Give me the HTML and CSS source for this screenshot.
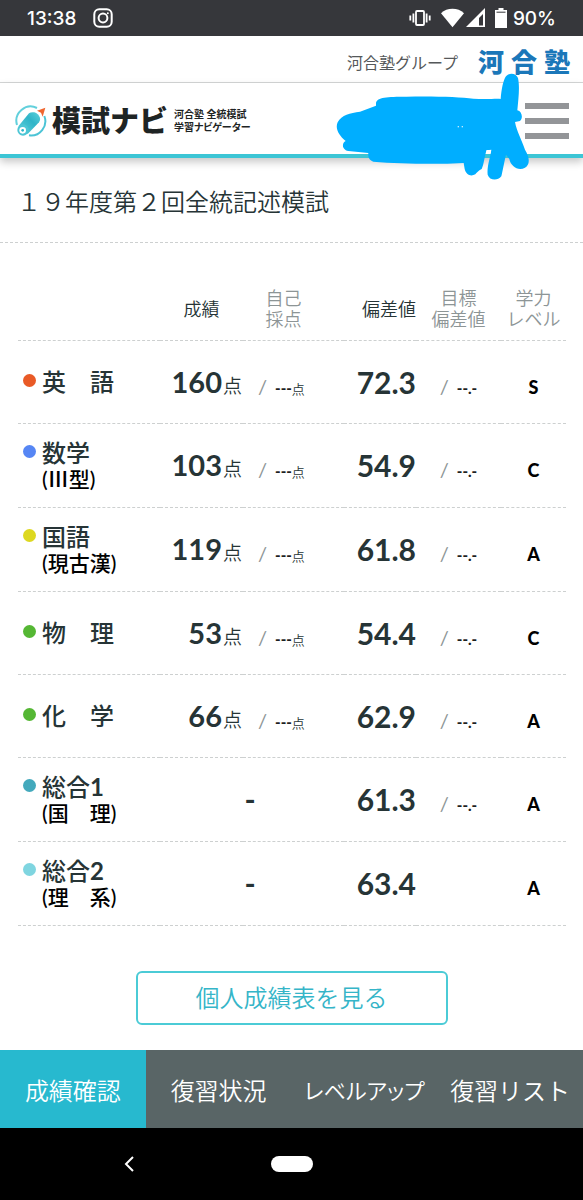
FILE: index.html
```html
<!DOCTYPE html>
<html lang="ja">
<head>
<meta charset="utf-8">
<meta name="viewport" content="width=device-width, initial-scale=1">
<title>模試ナビ</title>
<link rel="stylesheet" href="styles.css">
</head>
<body>
<div class="statusbar">
  <span class="clock">13:38</span>
  <svg class="insta" width="20" height="20" viewBox="0 0 20 20" fill="none" stroke="#fff" stroke-width="2"><rect x="1.3" y="1.3" width="17.4" height="17.4" rx="5"/><circle cx="10" cy="10" r="4.4"/><circle cx="14.8" cy="5.2" r="1" fill="#fff" stroke="none"/></svg>
  <span class="status-right">
    <svg width="22" height="18" viewBox="0 0 22 18" fill="none" stroke="#fff" stroke-width="1.8"><rect x="7" y="2" width="8" height="14" rx="1"/><path d="M4.4 4.5v9M1.3 6.5v5M17.6 4.5v9M20.7 6.5v5"/></svg>
    <svg class="wifi" width="23" height="20" viewBox="0 0 23 20"><path d="M0 5.2C6-.6 17-.6 23 5.2L11.5 19.200z" fill="#fff"/></svg>
    <svg width="19" height="20" viewBox="0 0 19 20"><path fill="#fff" fill-rule="evenodd" d="M19 0v19H0zM17 6l-4 4v7.500h4z"/></svg>
    <svg class="battery" width="12" height="20" viewBox="0 0 12 20"><path fill="#fff" d="M3.500 0h5v2H12v18H0V2h3.500z"/><path d="M1.500 4.200h9" stroke="#36373b" stroke-width="1"/></svg>
    <span class="percent">90%</span>
  </span>
</div>

<div class="groupbar">
  <span class="group-name">河合塾グループ</span>
  <a class="group-logo" href="#" aria-label="河合塾"><span>河</span><span>合</span><span>塾</span></a>
</div>

<header class="header">
  <a class="brand" href="#">
    <svg class="brand-mark" width="32" height="32" viewBox="0 0 96 96">
      <defs><linearGradient id="pen" x1="0" y1="1" x2="1" y2="0"><stop offset="0" stop-color="#5fd2dc"/><stop offset=".6" stop-color="#2fb4c8"/><stop offset="1" stop-color="#5fd2dc"/></linearGradient></defs>
      <path d="M66 9A43 43 0 0 0 6 60" fill="none" stroke="#62d0dc" stroke-width="6"/>
      <path d="M88 33A43 43 0 0 1 42 91" fill="none" stroke="#4cc4d6" stroke-width="6"/>
      <path d="M91 8L83 35 78 23 66 17z" fill="#f0662f"/>
      <path d="M10 64L42 25Q48 20 58 22 70 26 75 38 77 46 72 52L38 87z" fill="url(#pen)"/>
      <circle cx="24" cy="75" r="17" fill="#4cc6d5"/><circle cx="23" cy="76" r="10" fill="#fff"/><circle cx="23" cy="76" r="4" fill="#2cb5c8"/>
    </svg>
    <span class="brand-name">模試ナビ</span>
    <span class="brand-sub">河合塾 全統模試<br>学習ナビゲーター</span>
  </a>
  <button class="menu" type="button" aria-label="メニュー"><span></span><span></span><span></span></button>
  <svg class="scribble" width="195" height="108" viewBox="105 220 585 324" aria-hidden="true">
    <path fill="#00aeff" d="M228 310C232 292 260 291 320 291C400 289 480 292 520 297C560 300 590 296 602 298C604 270 610 240 618 230C628 218 648 220 654 235C660 262 655 300 652 332C666 335 670 355 660 364L645 367C650 395 665 420 675 450C690 475 690 495 675 504C655 515 632 500 628 478L618 465C612 490 608 515 604 530C592 545 568 542 563 525C560 500 572 470 574 450L560 452C553 470 552 495 545 508C535 512 530 520 526 524C512 532 498 525 494 508L491 490C400 495 300 492 220 486C205 480 204 468 205 460L145 454C125 450 125 430 137 424C115 405 105 385 113 368C125 345 150 340 180 336L228 318Z"/>
    <path fill="#fff" d="M473 380h4v3h-4zM485 380h4v3h-4zM560 451h12v8h-14z"/>
  </svg>
</header>

<main>
  <h1 class="title">１９年度第２回全統記述模試</h1>
  <table class="scores">
    <colgroup><col class="c-name"><col class="c-score"><col class="c-self"><col class="c-dev"><col class="c-target"><col class="c-level"></colgroup>
    <thead>
      <tr><td></td><th scope="col">成績</th><th class="sub self" scope="col">自己<br>採点</th><th class="dev" scope="col">偏差値</th><th class="sub" scope="col">目標<br>偏差値</th><th class="sub" scope="col">学力<br>レベル</th></tr>
    </thead>
    <tbody>
      <tr><th scope="row"><div class="subject"><i class="dot red"></i><span>英　語</span></div></th><td class="score">160<small>点</small></td><td class="self"><i>/</i><b>---</b><em>点</em></td><td class="dev">72.3</td><td class="target"><i>/</i><b>--.-</b></td><td class="level"><b>S</b></td></tr>
      <tr class="double"><th scope="row"><div class="subject"><i class="dot blue"></i><span>数学<small>(Ⅲ型)</small></span></div></th><td class="score">103<small>点</small></td><td class="self"><i>/</i><b>---</b><em>点</em></td><td class="dev">54.9</td><td class="target"><i>/</i><b>--.-</b></td><td class="level"><b>C</b></td></tr>
      <tr class="double"><th scope="row"><div class="subject"><i class="dot yellow"></i><span>国語<small>(現古漢)</small></span></div></th><td class="score">119<small>点</small></td><td class="self"><i>/</i><b>---</b><em>点</em></td><td class="dev">61.8</td><td class="target"><i>/</i><b>--.-</b></td><td class="level"><b>A</b></td></tr>
      <tr><th scope="row"><div class="subject"><i class="dot green"></i><span>物　理</span></div></th><td class="score">53<small>点</small></td><td class="self"><i>/</i><b>---</b><em>点</em></td><td class="dev">54.4</td><td class="target"><i>/</i><b>--.-</b></td><td class="level"><b>C</b></td></tr>
      <tr><th scope="row"><div class="subject"><i class="dot green"></i><span>化　学</span></div></th><td class="score">66<small>点</small></td><td class="self"><i>/</i><b>---</b><em>点</em></td><td class="dev">62.9</td><td class="target"><i>/</i><b>--.-</b></td><td class="level"><b>A</b></td></tr>
      <tr class="double"><th scope="row"><div class="subject"><i class="dot teal"></i><span>総合<b>1</b><small>(国　理)</small></span></div></th><td class="none" colspan="2">-</td><td class="dev">61.3</td><td class="target"><i>/</i><b>--.-</b></td><td class="level"><b>A</b></td></tr>
      <tr class="double"><th scope="row"><div class="subject"><i class="dot aqua"></i><span>総合<b>2</b><small>(理　系)</small></span></div></th><td class="none" colspan="2">-</td><td class="dev">63.4</td><td class="target"></td><td class="level"><b>A</b></td></tr>
    </tbody>
  </table>
  <button class="report" type="button">個人成績表を見る</button>
</main>

<nav class="tabs">
  <a class="active" href="#">成績確認</a>
  <a href="#">復習状況</a>
  <a class="kana" href="#">レベルアップ</a>
  <a href="#">復習リスト</a>
</nav>
<div class="sysnav">
  <svg width="10" height="16" viewBox="0 0 10 16" fill="none" stroke="#fff" stroke-width="2"><path d="M9 1L2 8l7 7"/></svg>
  <span class="pill"></span>
  <span></span>
</div>
</body>
</html>
```
FILE: styles.css
```css
* { box-sizing: border-box; }
body {
  margin: 0;
  min-height: 100vh;
  display: flex;
  flex-direction: column;
  background: #fff;
  color: #263436;
  font-family: Lato, "Noto Sans CJK JP", sans-serif;
}
a { color: inherit; text-decoration: none; }
svg { display: block; }

.statusbar {
  display: flex;
  align-items: center;
  height: 36px;
  padding: 0 27px;
  background: #36373b;
  color: #fff;
  font-family: Inter, sans-serif;
  font-size: 19px;
  font-weight: 500;
}
.insta { margin-left: 17px; }
.status-right { display: flex; align-items: center; margin-left: auto; }
.wifi { margin-left: 10px; margin-right: 2px; }
.battery { margin-left: 10px; }
.percent { margin-left: 6px; }

.groupbar {
  display: flex;
  align-items: center;
  justify-content: flex-end;
  gap: 20px;
  height: 47px;
  padding: 6px 13px 0 0;
  border-bottom: 1px solid #d5d7d7;
}
.group-name { color: #55585a; font-size: 16px; }
.group-logo {
  display: flex;
  gap: 7px;
  color: #1b77b9;
  font-size: 26px;
  font-weight: 900;
  line-height: 30px;
}

.header {
  position: relative;
  display: flex;
  align-items: center;
  justify-content: space-between;
  height: 75px;
  padding: 4px 14px 0 15px;
  background: #fff;
  border-bottom: 4px solid #3cc5d5;
  box-shadow: 0 4px 8px rgba(0, 0, 0, .22);
}
.brand { display: flex; align-items: center; color: #1e2424; }
.brand-name { margin-left: 5px; font-size: 29px; font-weight: 900; line-height: 36px; }
.brand-sub {
  margin-left: 6px;
  font-size: 10px;
  font-weight: 700;
  line-height: 13px;
  font-feature-settings: "palt";
}
.menu {
  display: flex;
  flex-direction: column;
  gap: 9px;
  width: 44px;
  padding: 0;
  border: 0;
  background: none;
}
.menu span { height: 6px; background: #939598; }
.scribble { position: absolute; right: 53px; top: -10px; }

main { flex: 1; }
.title {
  margin: 0;
  padding: 26px 17px 22px;
  border-bottom: 1px dashed #cdd0d0;
  font-size: 24px;
  font-weight: 350;
  line-height: 36px;
}
.scores {
  width: calc(100% - 35px);
  margin: 0 17px 0 18px;
  border-collapse: collapse;
  table-layout: fixed;
}
.c-name { width: 142px; }
.c-score { width: 83px; }
.c-self { width: 101px; }
.c-dev { width: 72px; }
.c-target { width: 85px; }
.c-level { width: 65px; }
.scores th, .scores td { padding: 0; border-bottom: 1px dashed #cdd0d0; }
.scores thead th {
  height: 97px;
  padding-top: 36px;
  font-size: 18px;
  font-weight: 350;
  line-height: 21px;
}
.scores thead .sub { color: #8d9596; }
.scores thead .self { padding-right: 20px; }
.scores .dev { text-align: right; white-space: nowrap; }
.scores tbody tr { height: 83px; }
.scores tbody tr.double { height: 84px; }
.scores tbody td { font-size: 30px; font-weight: 700; line-height: 36px; white-space: nowrap; }
.scores td small, .scores td i, .scores td b, .scores td em { line-height: 1; }
.subject {
  display: flex;
  padding-left: 5px;
  text-align: left;
  font-size: 24px;
  font-weight: 500;
  line-height: 26px;
}
.subject small { display: block; color: #000; font-size: 21px; line-height: 25px; }
.dot { flex: none; width: 13px; height: 13px; margin: 5px 6px 0 0; border-radius: 50%; }
.red { background: #e95a26; }
.blue { background: #5686f4; }
.yellow { background: #ddd820; }
.green { background: #55b734; }
.teal { background: #43a9bc; }
.aqua { background: #7fd5e0; }
.scores tbody .score { font-size: 29px; text-align: right; }
.score small { margin-left: 1px; padding-right: 1px; font-size: 19px; font-weight: 350; }
.scores tbody .self { padding-left: 15px; }
tbody i { font-style: normal; }
tbody td i { color: #8d9596; font-size: 20px; font-weight: 400; }
tbody td b { margin-left: 8px; color: #1c2122; font-size: 15px; }
tbody em { font-size: 13px; font-style: normal; font-weight: 350; }
.target, .level, .none { text-align: center; }
.scores tbody .none { padding-right: 4px; }
tbody .level b { margin: 0; color: #000; font-size: 18px; }

.report {
  display: block;
  width: 312px;
  max-width: 100%;
  height: 54px;
  margin: 45px auto 25px;
  padding: 0 0 2px;
  border: 2px solid #4bcbd6;
  border-radius: 6px;
  background: #fff;
  color: #35b5c8;
  font-family: inherit;
  font-size: 24px;
  font-weight: 350;
}
.tabs { display: grid; grid-template-columns: repeat(4, 1fr); height: 78px; background: #596566; color: #fff; }
.tabs a {
  display: flex;
  align-items: center;
  justify-content: center;
  font-size: 24px;
  font-weight: 350;
  white-space: nowrap;
}
.tabs .active { background: #27b9cf; }
.tabs .kana { font-size: 22px; font-feature-settings: "palt"; }
.sysnav {
  display: grid;
  grid-template-columns: 1fr 42px 1fr;
  align-items: center;
  height: 72px;
  background: #000;
}
.sysnav svg { margin-left: 124px; }
.pill { height: 16px; border-radius: 8px; background: #fff; }
```
